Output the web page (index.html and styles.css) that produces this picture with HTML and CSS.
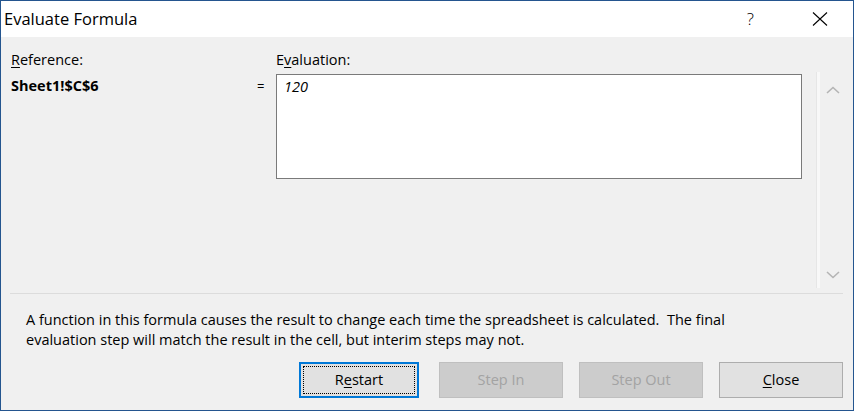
FILE: index.html
```html
<!DOCTYPE html>
<html lang="en">
<head>
<meta charset="utf-8">
<title>Evaluate Formula</title>
<link rel="stylesheet" href="styles.css">
</head>
<body>
<div class="window">
  <div class="titlebar">
    <span class="title">Evaluate Formula</span>
    <span class="help">?</span>
    <svg class="close-x" width="16" height="16" viewBox="0 0 16 16" aria-hidden="true">
      <path d="M1 1.5 L15 14.5 M15 1.5 L1 14.5" stroke="#000" stroke-width="1.1" fill="none"/>
    </svg>
  </div>
  <div class="content">
    <div class="main">
      <div class="label"><u>R</u>eference:</div>
      <div></div>
      <div class="label">E<u>v</u>aluation:</div>
      <div></div>
      <div></div>
      <div class="ref">Sheet1!$C$6</div>
      <div class="eq">=</div>
      <div class="evalcol"><div class="evalbox">120</div></div>
      <div></div>
      <div class="scroll">
        <svg class="chev" width="14" height="8" viewBox="0 0 14 8" aria-hidden="true"><path d="M1 7 L7 1.5 L13 7" stroke="#b4b4b4" stroke-width="1.6" fill="none"/></svg>
        <svg class="chev" width="14" height="8" viewBox="0 0 14 8" aria-hidden="true"><path d="M1 1 L7 6.5 L13 1" stroke="#b4b4b4" stroke-width="1.6" fill="none"/></svg>
      </div>
    </div>
    <div class="sep"></div>
    <p class="msg">A function in this formula causes the result to change each time the spreadsheet is calculated.&nbsp; The final evaluation step will match the result in the cell, but interim steps may not.</p>
    <div class="buttons">
      <button class="btn focus">R<u>e</u>start</button>
      <button class="btn disabled">Step In</button>
      <button class="btn disabled">Step Out</button>
      <button class="btn"><u>C</u>lose</button>
    </div>
  </div>
</div>
</body>
</html>
```

FILE: styles.css
```css
* { box-sizing: border-box; }
html, body { margin: 0; padding: 0; }
body {
  width: 854px;
  height: 411px;
  overflow: hidden;
  font-family: "Open Sans", "Noto Sans", sans-serif;
  font-size: 14.5px;
  color: #000;
  background: #f0f0f0;
}
.window {
  width: 854px;
  height: 411px;
  border: 1px solid #24558f;
  display: flex;
  flex-direction: column;
}
.titlebar {
  height: 36px;
  background: #fff;
  display: flex;
  align-items: center;
  flex-shrink: 0;
}
.title {
  font-size: 16.5px;
  padding-left: 3px;
  flex: 1;
  padding-bottom: 1px;
}
.help {
  font-size: 17px;
  font-weight: 300;
  margin-right: 58px;
  padding-bottom: 1px;
}
.close-x {
  margin-right: 25px;
}
.content {
  flex: 1;
  background: #f0f0f0;
  display: flex;
  flex-direction: column;
}
.main {
  display: grid;
  grid-template-columns: 246px 19px 526px 15px 34px;
  grid-template-rows: 22px 216px;
  margin-top: 13px;
  padding-left: 10px;
  line-height: 20px;
}
.label u, .btn u { text-decoration-thickness: 1px; text-underline-offset: 2px; }
.ref {
  font-weight: 700;
  padding-top: 4px;
}
.eq {
  padding-top: 4px;
  font-size: 13px;
}
.evalcol { padding-top: 2px; }
.evalbox {
  height: 105px;
  background: #fff;
  border: 1px solid #7a7a7a;
  padding: 2px 7px;
  font-style: italic;
}
.scroll {
  border-left: 3px solid #f8f8f8;
  box-shadow: -1px 0 0 #e6e6e6;
  display: flex;
  flex-direction: column;
  justify-content: space-between;
  align-items: center;
  padding: 14px 6px 9px 0;
}
.sep {
  margin: 5px 10px 0 9px;
  border-top: 1px solid #dcdcdc;
}
.msg {
  margin: 0;
  padding: 16px 100px 0 25px;
  line-height: 20px;
}
.buttons {
  display: flex;
  justify-content: flex-end;
  gap: 16px;
  margin-top: 12px;
  padding-right: 10px;
}
.btn {
  width: 124px;
  height: 36px;
  font-family: inherit;
  font-size: 14.5px;
  color: #000;
  background: #e1e1e1;
  border: 1px solid #adadad;
  padding: 0 0 2px;
}
.btn.focus {
  width: 120px;
  margin-right: 4px;
  border: 2px solid #0078d7;
  outline: 1px dotted #000;
  outline-offset: -5px;
}
.btn.disabled {
  background: #cccccc;
  border-color: #bfbfbf;
  color: #a3a3a3;
}
```
